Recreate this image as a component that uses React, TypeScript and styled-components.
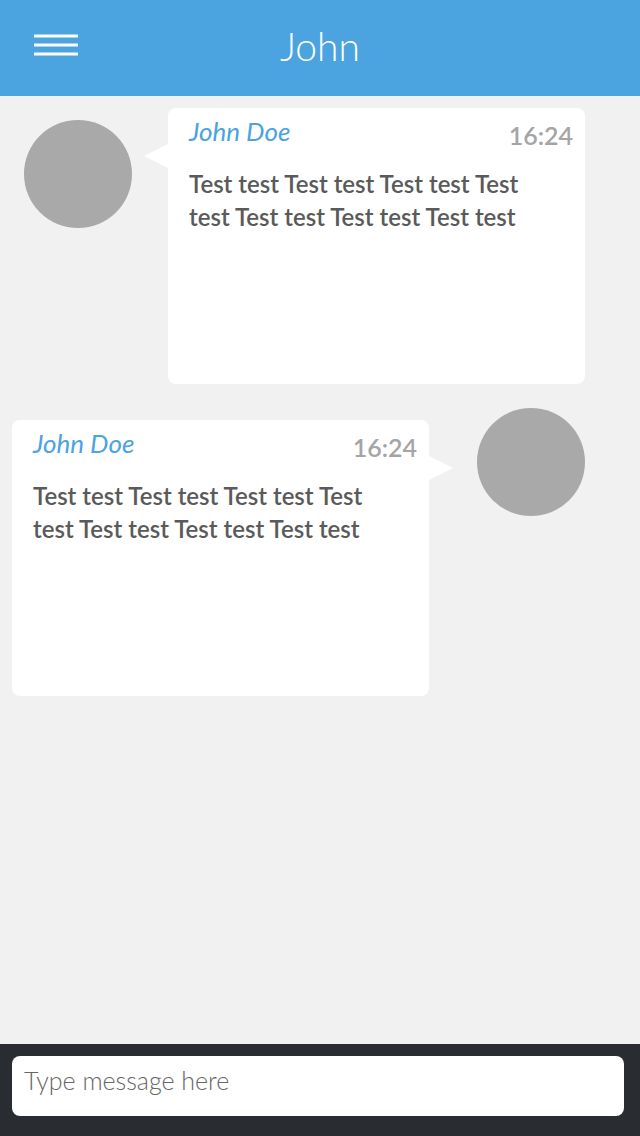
import React, { useState } from "react";
import styled, { createGlobalStyle } from "styled-components";

const GlobalStyle = createGlobalStyle`
  * { box-sizing: border-box; }
  body {
    margin: 0;
    background: #f1f1f1;
    font-family: "Avenir Next", Lato, "Open Sans", sans-serif;
  }
`;

type Side = "left" | "right";

const Page = styled.div`
  display: flex;
  flex-direction: column;
  min-height: 100vh;
`;

const Header = styled.header`
  display: grid;
  grid-template-columns: 1fr auto 1fr;
  align-items: center;
  height: 96px;
  padding: 0 24px 4px;
  background: #4ba3e0;
  color: #fff;
`;

const MenuButton = styled.button`
  justify-self: start;
  display: flex;
  padding: 10px;
  margin: 0 0 2px;
  border: 0;
  background: none;
  color: inherit;
  cursor: pointer;
`;

const Title = styled.h1`
  margin: 0;
  font-size: 39px;
  line-height: 48px;
  font-weight: 300;
`;

const Messages = styled.main`
  flex: 1;
  display: flex;
  flex-direction: column;
  gap: 24px;
  padding: 12px 55px 24px 12px;
`;

const Message = styled.article<{ $side: Side }>`
  display: flex;
  align-items: flex-start;
  flex-direction: ${(p) => (p.$side === "left" ? "row" : "row-reverse")};
  gap: ${(p) => (p.$side === "left" ? 36 : 48)}px;
  padding-left: ${(p) => (p.$side === "left" ? 12 : 0)}px;
`;

const Avatar = styled.div<{ $side: Side }>`
  flex: none;
  width: 108px;
  height: 108px;
  margin-top: ${(p) => (p.$side === "left" ? 12 : 0)}px;
  border-radius: 50%;
  background: #a9a9a9;
`;

const Bubble = styled.div<{ $side: Side }>`
  position: relative;
  flex: 1;
  min-height: 276px;
  margin-top: ${(p) => (p.$side === "left" ? 0 : 12)}px;
  padding: 7px 12px 12px 21px;
  border-radius: 8px;
  background: #fff;

  &::after {
    content: "";
    position: absolute;
    top: 36px;
    ${(p) => (p.$side === "left" ? "right" : "left")}: 100%;
    width: 24px;
    height: 24px;
    background: #fff;
    clip-path: ${(p) =>
      p.$side === "left"
        ? "polygon(0 50%, 100% 0, 100% 100%)"
        : "polygon(100% 50%, 0 0, 0 100%)"};
  }
`;

const BubbleHeader = styled.div`
  display: flex;
  justify-content: space-between;
  align-items: flex-start;
`;

const Author = styled.h2`
  margin: 0;
  color: #4ba3e0;
  font-size: 26px;
  line-height: 32px;
  font-style: italic;
  font-weight: 400;
`;

const Time = styled.time`
  padding-top: 4px;
  color: #a5a5a5;
  font-size: 25px;
  line-height: 32px;
  font-weight: 600;
`;

const Body = styled.p`
  margin: 16px 40px 0 0;
  color: #5a5a5a;
  font-size: 24px;
  line-height: 33px;
  font-weight: 600;
`;

const Composer = styled.form`
  position: sticky;
  bottom: 0;
  display: flex;
  padding: 12px 16px 20px 12px;
  background: #292c31;
`;

const MessageInput = styled.input`
  flex: 1;
  min-width: 0;
  height: 60px;
  padding: 0 12px 12px;
  border: 0;
  border-radius: 8px;
  outline: none;
  background: #fff;
  color: #5a5a5a;
  font-family: inherit;
  font-size: 25px;
  font-weight: 300;

  &::placeholder {
    color: #666;
    opacity: 1;
  }
`;

const text =
  "Test test Test test Test test Test test Test test Test test Test test";

const messages: { side: Side; author: string; time: string }[] = [
  { side: "left", author: "John Doe", time: "16:24" },
  { side: "right", author: "John Doe", time: "16:24" },
];

export default function App() {
  const [draft, setDraft] = useState("");
  return (
    <Page>
      <GlobalStyle />
      <Header>
        <MenuButton type="button" aria-label="Menu">
          <svg width="44" height="22" viewBox="0 0 44 22" fill="currentColor" aria-hidden="true">
            <path opacity="0.5" d="M0 0h44v4H0zM0 9h44v4H0zM0 18h44v4H0z" />
            <path d="M0 1h44v2H0zM0 10h44v2H0zM0 19h44v2H0z" />
          </svg>
        </MenuButton>
        <Title>John</Title>
      </Header>
      <Messages>
        {messages.map((m) => (
          <Message key={m.side} $side={m.side}>
            <Avatar $side={m.side} />
            <Bubble $side={m.side}>
              <BubbleHeader>
                <Author>{m.author}</Author>
                <Time dateTime={m.time}>{m.time}</Time>
              </BubbleHeader>
              <Body>{text}</Body>
            </Bubble>
          </Message>
        ))}
      </Messages>
      <Composer onSubmit={(e) => e.preventDefault()}>
        <MessageInput
          aria-label="Message"
          placeholder="Type message here"
          value={draft}
          onChange={(e) => setDraft(e.target.value)}
        />
      </Composer>
    </Page>
  );
}
